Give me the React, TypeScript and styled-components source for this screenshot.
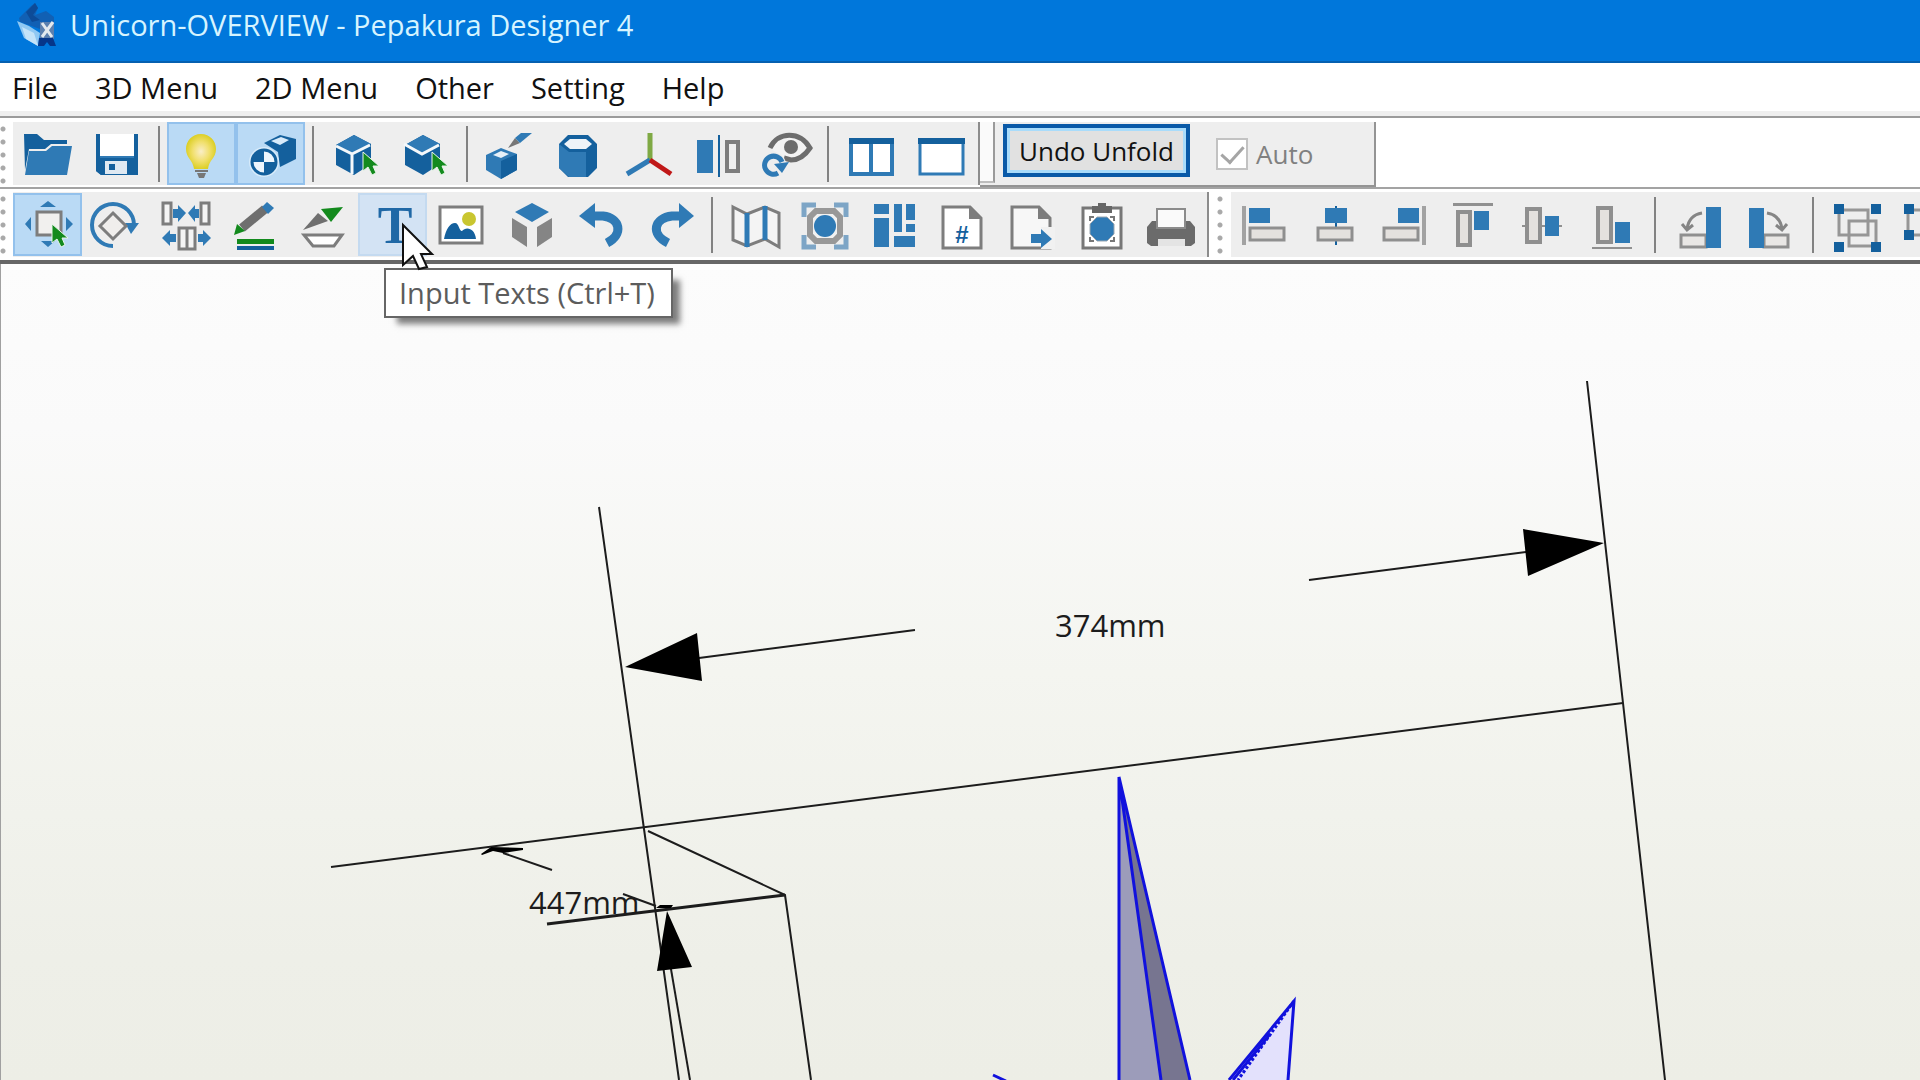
import React from "react";
import styled, { createGlobalStyle } from "styled-components";

const BLUE = "#2f7ab5";
const DEEP = "#14609d";
const GRAY = "#7d7d7d";
const GREEN = "#138a1d";
const UI_FONT = `"Open Sans", "Noto Sans", sans-serif`;

const GlobalStyle = createGlobalStyle`
  * { box-sizing: border-box; }
  body { margin: 0; background: #fff; font-family: ${UI_FONT}; overflow: hidden; }
`;

const Window = styled.div`
  display: flex;
  flex-direction: column;
  height: 100vh;
`;

const TitleBar = styled.header`
  display: flex;
  align-items: center;
  gap: 12px;
  height: 63px;
  padding: 0 0 12px 16px;
  background: #0077db;
  border-bottom: 2px solid #0560b0;
`;

const Title = styled.h1`
  margin: 0;
  font-size: 29px;
  line-height: 36px;
  font-weight: 500;
  color: #d6f4ff;
  white-space: nowrap;
`;

const MenuBar = styled.nav`
  display: flex;
  align-items: center;
  gap: 37px;
  height: 55px;
  padding: 0 12px 4px;
  background: linear-gradient(#fff 48px, #efefef 48px);
  border-bottom: 2px solid #9b9b9b;
`;

const MenuItem = styled.button`
  padding: 0;
  border: 0;
  background: none;
  font-family: inherit;
  font-size: 29px;
  line-height: 36px;
  color: #111;
  white-space: nowrap;
`;

const Row = styled.div<{ $last?: boolean }>`
  display: flex;
  align-items: stretch;
  height: ${(p) => (p.$last ? 75 : 71)}px;
  padding: ${(p) => (p.$last ? "3px 0" : "4px 0 2px")};
  overflow: hidden;
  border-bottom: ${(p) => (p.$last ? "4px solid #666" : "2px solid #a3a3a3")};
`;

const Group = styled.div<{ $edge?: boolean }>`
  display: flex;
  flex: none;
  align-items: center;
  padding-right: 4px;
  background: #eeeeee;
  border-right: ${(p) => (p.$edge ? "2px solid #8c8c8c" : "0")};
`;

const Grip = styled.div<{ $wide?: boolean }>`
  flex: none;
  align-self: stretch;
  width: ${(p) => (p.$wide ? 22 : 13)}px;
  background: radial-gradient(circle at ${(p) => (p.$wide ? 11 : 3)}px 7px, #a9a9a9 2px, transparent 3px) 0 0 / 100% 13px #fff;
`;

const Tool = styled.button<{ $on?: boolean; $hover?: boolean }>`
  position: relative;
  display: flex;
  align-items: center;
  justify-content: center;
  width: 69px;
  height: 63px;
  padding: 0;
  border: 2px solid ${(p) => (p.$on ? "#93c1ec" : p.$hover ? "#c4daf0" : "transparent")};
  background: ${(p) => (p.$on ? "#badaf5" : p.$hover ? "#d3e3f4" : "transparent")};
  svg { flex: none; overflow: visible; }
`;

const Separator = styled.div<{ $w: number }>`
  flex: none;
  width: ${(p) => p.$w}px;
  height: 56px;
  background: linear-gradient(#828282, #828282) center / 2px 100% no-repeat;
`;

const UnfoldBar = styled.div`
  display: flex;
  flex: none;
  align-items: center;
  width: 396px;
  margin-bottom: -2px;
  background: #eeeeee;
  border-right: 2px solid #949494;
  border-bottom: 2px solid #949494;
`;

const HookGrip = styled.div`
  align-self: flex-start;
  width: 15px;
  height: 61px;
  border-right: 2px solid #9a9a9a;
  border-bottom: 2px solid #bdbdbd;
  background: #fafafa;
`;

const UndoUnfold = styled.button`
  width: 187px;
  height: 53px;
  margin: 0 26px 6px 8px;
  padding: 0;
  border: 4px solid #0a5aa8;
  box-shadow: inset 0 0 0 3px #a9dcfb;
  background: #e1e1e1;
  font-family: inherit;
  font-size: 26px;
  line-height: 36px;
  color: #111;
  white-space: nowrap;
`;

const AutoLabel = styled.label`
  display: flex;
  align-items: center;
  gap: 8px;
  font-size: 26px;
  line-height: 36px;
  color: #808080;
`;

const AutoBox = styled.input`
  appearance: none;
  position: relative;
  width: 32px;
  height: 32px;
  margin: 0;
  border: 2px solid #c2c2c2;
  background: #fff;
  &::after {
    content: "";
    position: absolute;
    left: 8px;
    top: 1px;
    width: 10px;
    height: 19px;
    border: solid #a5a5a5;
    border-width: 0 3px 3px 0;
    transform: rotate(42deg);
  }
`;

const Canvas = styled.main`
  position: relative;
  flex: 1;
  min-height: 0;
  border-left: 1px solid #a0a0a0;
  background: linear-gradient(#fcfcfc, #fafafa 20%, #f4f5f0 50%, #eeefe8 85%, #edeee6);
`;

const Scene = styled.svg`
  display: block;
  width: 100%;
  height: 100%;
  font-family: ${UI_FONT};
`;

const Tooltip = styled.div`
  position: absolute;
  left: 383px;
  top: 4px;
  padding: 5px 16px 5px 13px;
  border: 2px solid #666;
  background: #fff;
  box-shadow: 10px 9px 6px -3px rgba(0, 0, 0, 0.5);
  font-size: 29px;
  line-height: 36px;
  color: #5c5c5c;
  white-space: nowrap;
`;

const Pointer = styled.svg`
  position: absolute;
  left: 400px;
  top: -42px;
`;

const GreenCursor = ({ x, y }: { x: number; y: number }) => (
  <path
    transform={`translate(${x} ${y})`}
    d="M0 0V19L5 15L9 23L13 21L10 14H16Z"
    fill={GREEN}
    stroke="#e9f5ea"
    strokeWidth="1"
  />
);

const cubeBody = (
  <>
    <path d="M4 15L22 5L39 14V34L22 45L4 35Z" fill={DEEP} />
    <path d="M4 15L22 5L39 14L22 23Z" fill={BLUE} />
  </>
);

const docShape = "M5 6H32L43 17V47H5Z";
const octagon = "M-5 -12H5L12 -5V5L5 12H-5L-12 5V-5Z";

const icons: Record<string, React.ReactNode> = {
  open: (
    <>
      <path d="M0 4H13L20 10H43V14H27L21 19H5L1 40Z" fill={DEEP} />
      <path d="M5 21H22L28 16H48L43 45H1Z" fill={BLUE} />
    </>
  ),
  save: (
    <>
      <path d="M3 4H45V45H8L3 41Z" fill={BLUE} />
      <path d="M3 4H7V28H41V4H45V45H8L3 41Z" fill={DEEP} />
      <path d="M7 4H41V26H7Z" fill="#fff" />
      <path d="M12 31H34V44H12Z" fill="#dfe9f2" />
      <path d="M16 34H22V40H16Z" fill={DEEP} />
    </>
  ),
  light: (
    <>
      <defs>
        <radialGradient id="glow">
          <stop offset="0" stopColor="#faeec8" />
          <stop offset=".55" stopColor="#f1e06e" />
          <stop offset="1" stopColor="#dccf27" />
        </radialGradient>
      </defs>
      <path d="M23 4C14 4 8 11 8 19C8 28 15 30 16 39H30C31 30 38 28 38 19C38 11 32 4 23 4Z" fill="url(#glow)" />
      <path d="M17 40H30V42H17ZM19 43H28L26 48H21Z" fill="#777" />
    </>
  ),
  texture: (
    <>
      <path d="M17 13L33 5L49 9V29L33 37L31 22Z" fill={DEEP} />
      <path d="M24 11L34 7L42 10L33 15Z" fill="#d8ebfa" />
      <circle cx="17" cy="32" r="15" fill="#d8ebfa" />
      <circle cx="17" cy="32" r="12" fill="#eef6fd" stroke={DEEP} strokeWidth="3" />
      <path d="M17 32V20A12 12 0 0 0 5 32ZM17 32V44A12 12 0 0 0 29 32Z" fill={DEEP} />
    </>
  ),
  selectFace: (
    <>
      {cubeBody}
      <path d="M4 16L20 24V44M20 24L38 15" fill="none" stroke="#f4f8fb" strokeWidth="3" />
      <GreenCursor x={31} y={22} />
    </>
  ),
  selectEdge: (
    <>
      {cubeBody}
      <path d="M3 14L21 24L38 15" fill="none" stroke="#f4f8fb" strokeWidth="3" />
      <GreenCursor x={31} y={22} />
    </>
  ),
  paintCube: (
    <>
      <path d="M0 25L15 18L31 24V40L15 49L0 40Z" fill={BLUE} />
      <path d="M15 31L31 24V40L15 49Z" fill={DEEP} />
      <path d="M7 25L15 21L23 24L15 28Z" fill="#e6f0f8" />
      <path d="M22 18L29 8L34 13Z" fill="#777" />
      <path d="M29 8L35 3H46L34 13Z" fill={BLUE} />
    </>
  ),
  cylinder: (
    <>
      <path d="M4 14L13 5H33L42 14V38L33 47H13L4 38Z" fill={DEEP} />
      <path d="M4 14L14 22V47L4 38ZM14 22H31V47H14Z" fill={BLUE} />
      <path d="M9 14L15 9H31L37 14L31 19H15Z" fill="#eef3f8" />
    </>
  ),
  axes: (
    <g strokeWidth="5" fill="none">
      <path d="M26 30V3" stroke="#7fa944" />
      <path d="M26 30L3 44" stroke={BLUE} />
      <path d="M26 30L47 44" stroke="#c01818" />
    </g>
  ),
  mirror: (
    <>
      <path d="M4 10H20V43H4Z" fill={BLUE} />
      <path d="M26 5V47" stroke={DEEP} strokeWidth="2" />
      <path d="M34 12H45V41H34Z" fill="#eee" stroke={GRAY} strokeWidth="4" />
    </>
  ),
  view: (
    <>
      <path d="M8 18C16 1 38 1 48 18C42 27 36 30 29 30L22 28" fill="#f3f3f3" stroke="#6d6d6d" strokeWidth="5" />
      <circle cx="29" cy="17" r="7" fill="#6d6d6d" />
      <circle cx="11" cy="35" r="13" fill="#eee" />
      <path d="M16 43A9 9 0 1 1 20 32" fill="none" stroke={BLUE} strokeWidth="5" />
      <path d="M12 34L27 32L20 43Z" fill={BLUE} />
    </>
  ),
  twoPanes: (
    <>
      <path d="M4 10H45V44H4ZM24 12V44" fill="#fff" stroke={BLUE} strokeWidth="4" />
      <path d="M2 8H47V14H2Z" fill={DEEP} />
    </>
  ),
  onePane: (
    <>
      <path d="M4 10H47V44H4Z" fill="#fff" stroke={BLUE} strokeWidth="3" />
      <path d="M2 8H49V14H2Z" fill={DEEP} />
    </>
  ),
  move: (
    <>
      <path d="M16 6L24 0L32 6ZM7 16V30L1 23ZM42 16V30L49 23ZM17 40H31L24 46Z" fill={BLUE} />
      <path d="M13 11H37V34H13Z" fill="#f1f0ee" stroke={GRAY} strokeWidth="3" />
      <GreenCursor x={28} y={23} />
    </>
  ),
  rotate: (
    <>
      <path d="M20 45A21 21 0 1 1 41 24" fill="none" stroke={BLUE} strokeWidth="4" />
      <path d="M32 22H46L38 33Z" fill={BLUE} />
      <path d="M20 12L33 25L20 38L7 25Z" fill="#f0eeec" stroke={GRAY} strokeWidth="3" />
    </>
  ),
  joinParts: (
    <>
      <path d="M1 2H9V23H1ZM39 2H47V23H39ZM17 27H25V48H17ZM25 27H33V48H25Z" fill="#f4f4f4" stroke={GRAY} strokeWidth="3" />
      <path
        d="M11 8H16V4L24 12L16 21V17H11ZM37 8H33V4L26 12L33 21V17H37ZM14 33H8V29L0 37L8 45V41H14ZM36 33H41V29L49 37L41 45V41H36Z"
        fill={BLUE}
      />
    </>
  ),
  lineColor: (
    <>
      <path d="M11 27L34 8" stroke="#6f6f6f" strokeWidth="9" />
      <path d="M31 6L36 1L43 7L37 13Z" fill={BLUE} />
      <path d="M3 34L6 23L14 30Z" fill={GREEN} />
      <path d="M6 38H43V43H6Z" fill={GREEN} />
      <path d="M6 45H43V49H6Z" fill={DEEP} />
    </>
  ),
  flaps: (
    <>
      <path d="M3 29L18 12L28 20Z" fill="#6f6f6f" />
      <path d="M21 8L43 6L31 21Z" fill={GREEN} />
      <path d="M4 34H42L34 45H13Z" fill="#fff" stroke={GRAY} strokeWidth="3" />
    </>
  ),
  text: (
    <text x="26" y="42" textAnchor="middle" fontFamily="Liberation Serif, serif" fontWeight="700" fontSize="52" fill="#1f68a6">
      T
    </text>
  ),
  image: (
    <>
      <path d="M2 6H44V42H2Z" fill="#fff" stroke={GRAY} strokeWidth="3" />
      <circle cx="31" cy="18" r="7" fill="#c9c630" />
      <path d="M6 38C8 28 12 22 17 22C21 22 21 30 24 30C28 25 37 27 38 38Z" fill={DEEP} />
    </>
  ),
  cube3d: (
    <>
      <path d="M8 11L25 2L42 11L25 21Z" fill={BLUE} />
      <path d="M5 17L20 26V46L5 36ZM45 17L30 26V46L45 36Z" fill="#858585" />
    </>
  ),
  undo: (
    <>
      <path d="M17 15H27C44 17 48 33 31 42" fill="none" stroke={BLUE} strokeWidth="9" />
      <path d="M3 15L19 2V27Z" fill={BLUE} />
    </>
  ),
  redo: (
    <>
      <path d="M35 15H27C9 17 5 33 23 42" fill="none" stroke={BLUE} strokeWidth="9" />
      <path d="M49 15L34 2V27Z" fill={BLUE} />
    </>
  ),
  unfoldMap: (
    <>
      <path d="M2 6L16 13L34 6L48 12V46L34 38L16 45L2 39Z" fill="#f4f4f4" stroke={GRAY} strokeWidth="3" />
      <path d="M16 12V46M34 5V39" stroke={BLUE} strokeWidth="5" />
    </>
  ),
  fit: (
    <>
      <path d="M4 16V4H16M34 4H46V16M46 34V46H34M16 46H4V34" fill="none" stroke="#7da5c6" strokeWidth="5" />
      <path transform="translate(25 25)" d="M-9 -15H9L15 -9V9L9 15H-9L-15 9V-9Z" fill="#f1f1f1" stroke="#989898" strokeWidth="6" />
      <circle cx="25" cy="25" r="11" fill={BLUE} />
    </>
  ),
  arrange: (
    <path d="M5 3H20V13H5ZM5 17H20V46H5ZM25 3H33V31H25ZM37 3H46V19H37ZM37 23H46V31H37ZM25 35H46V46H25Z" fill={BLUE} />
  ),
  number: (
    <>
      <path d={docShape} fill="#fff" stroke={GRAY} strokeWidth="3" />
      <path d="M31 5L44 18H31Z" fill={GRAY} />
      <text x="24" y="42" textAnchor="middle" fontFamily="Liberation Sans, sans-serif" fontWeight="700" fontSize="24" fill={DEEP}>
        #
      </text>
    </>
  ),
  exportDoc: (
    <>
      <path d={docShape} fill="#f7f7f7" stroke={GRAY} strokeWidth="3" />
      <path d="M31 5L44 18H31Z" fill={GRAY} />
      <path d="M34 26H48V48H34Z" fill="#f1f1f1" />
      <path d="M24 33H34V28L45 38L34 47V42H24Z" fill={BLUE} />
    </>
  ),
  clipboard: (
    <>
      <path d="M7 7H45V47H7Z" fill="#fff" stroke="#777" strokeWidth="3" />
      <path d="M16 5H22V2H30V5H36V12H16Z" fill="#666" />
      <path transform="translate(26 28)" d={octagon} fill={BLUE} stroke="#9aa6b0" strokeWidth="1" />
      <path d="M14 20V16H18M34 16H38V20M38 36V40H34M18 40H14V36" fill="none" stroke="#777" strokeWidth="2" />
    </>
  ),
  print: (
    <>
      <path d="M7 20H45L50 26V42L46 45H6L2 42V26Z" fill="#6b6b6b" />
      <path d="M12 8H40V27H12Z" fill="#fafafa" stroke="#8b8b8b" strokeWidth="2" />
      <path d="M13 38H40V45H13Z" fill="#e4e4e4" />
    </>
  ),
  alignLeft: (
    <>
      <path d="M0 5H4V44H0Z" fill="#a2a2a2" />
      <path d="M7 7H28V22H7Z" fill={BLUE} />
      <path d="M8 27H42V39H8Z" fill="#e4e1de" stroke="#8f8f8f" strokeWidth="3" />
    </>
  ),
  alignCenter: (
    <>
      <path d="M25 5V44" stroke={DEEP} strokeWidth="2" />
      <path d="M14 7H36V22H14Z" fill={BLUE} />
      <path d="M7 27H41V39H7Z" fill="#e4e1de" stroke="#8f8f8f" strokeWidth="3" />
    </>
  ),
  alignRight: (
    <>
      <path d="M42 5H46V44H42Z" fill="#a2a2a2" />
      <path d="M18 7H39V22H18Z" fill={BLUE} />
      <path d="M4 27H38V39H4Z" fill="#e4e1de" stroke="#8f8f8f" strokeWidth="3" />
    </>
  ),
  alignTop: (
    <>
      <path d="M4 2H44V5H4Z" fill="#909090" />
      <path d="M9 11H21V44H9Z" fill="#e4e1de" stroke="#8f8f8f" strokeWidth="4" />
      <path d="M25 10H40V29H25Z" fill={BLUE} />
    </>
  ),
  alignMiddle: (
    <>
      <path d="M4 25H44" stroke="#909090" strokeWidth="2" />
      <path d="M9 8H22V41H9Z" fill="#e4e1de" stroke="#8f8f8f" strokeWidth="4" />
      <path d="M27 15H41V35H27Z" fill={BLUE} />
    </>
  ),
  alignBottom: (
    <>
      <path d="M5 46H45V48H5Z" fill="#909090" />
      <path d="M11 7H24V41H11Z" fill="#e4e1de" stroke="#8f8f8f" strokeWidth="4" />
      <path d="M28 21H43V42H28Z" fill={BLUE} />
    </>
  ),
  turnLeft: (
    <>
      <path d="M5 34H30V46H5Z" fill="#e9e7e5" stroke="#8f8f8f" strokeWidth="3" />
      <path d="M30 6H45V47H30Z" fill={BLUE} />
      <path d="M26 12Q13 14 11 28M6 23L11 29L17 24" fill="none" stroke="#858585" strokeWidth="3" />
    </>
  ),
  turnRight: (
    <>
      <path d="M19 34H43V46H19Z" fill="#e9e7e5" stroke="#8f8f8f" strokeWidth="3" />
      <path d="M4 7H19V47H4Z" fill={BLUE} />
      <path d="M22 12Q35 14 37 28M31 24L37 29L42 23" fill="none" stroke="#858585" strokeWidth="3" />
    </>
  ),
  group: (
    <>
      <path d="M5 9H34V34H5ZM15 20H42V45H15Z" fill="none" stroke="#969696" strokeWidth="3" />
      <path d="M0 3H10V13H0ZM37 3H47V13H37ZM0 41H10V51H0ZM37 41H47V51H37Z" fill={DEEP} />
    </>
  ),
  ungroup: (
    <>
      <path d="M5 9H34V34H5Z" fill="none" stroke="#969696" strokeWidth="3" />
      <path d="M1 3H11V13H1ZM1 29H11V39H1ZM30 3H40V13H30Z" fill={DEEP} />
    </>
  ),
};

type Entry = { icon: string; label: string; on?: boolean; hover?: boolean } | "|";

const viewTools: Entry[] = [
  { icon: "open", label: "Open" },
  { icon: "save", label: "Save" },
  "|",
  { icon: "light", label: "Light", on: true },
  { icon: "texture", label: "Texture", on: true },
  "|",
  { icon: "selectFace", label: "Select Face" },
  { icon: "selectEdge", label: "Select Edge" },
  "|",
  { icon: "paintCube", label: "Paint Model" },
  { icon: "cylinder", label: "Show Solid" },
  { icon: "axes", label: "Show Axes" },
  { icon: "mirror", label: "Mirror" },
  { icon: "view", label: "Reset View" },
  "|",
  { icon: "twoPanes", label: "Two Panes" },
  { icon: "onePane", label: "One Pane" },
];

const editTools: Entry[] = [
  { icon: "move", label: "Select and Move", on: true },
  { icon: "rotate", label: "Rotate" },
  { icon: "joinParts", label: "Join or Disjoin" },
  { icon: "lineColor", label: "Edge Color" },
  { icon: "flaps", label: "Edit Flaps" },
  { icon: "text", label: "Input Texts", hover: true },
  { icon: "image", label: "Input Image" },
  { icon: "cube3d", label: "Input 3D View" },
  { icon: "undo", label: "Undo" },
  { icon: "redo", label: "Redo" },
  "|",
  { icon: "unfoldMap", label: "Unfold" },
  { icon: "fit", label: "Fit to Window" },
  { icon: "arrange", label: "Arrange Parts" },
  { icon: "number", label: "Edge Numbers" },
  { icon: "exportDoc", label: "Export" },
  { icon: "clipboard", label: "Copy" },
  { icon: "print", label: "Print" },
];

const alignTools: Entry[] = [
  { icon: "alignLeft", label: "Align Left" },
  { icon: "alignCenter", label: "Align Center" },
  { icon: "alignRight", label: "Align Right" },
  { icon: "alignTop", label: "Align Top" },
  { icon: "alignMiddle", label: "Align Middle" },
  { icon: "alignBottom", label: "Align Bottom" },
  "|",
  { icon: "turnLeft", label: "Rotate Left" },
  { icon: "turnRight", label: "Rotate Right" },
  "|",
  { icon: "group", label: "Group" },
  { icon: "ungroup", label: "Ungroup" },
];

function Tools({ items, gap, edge }: { items: Entry[]; gap: number; edge?: boolean }) {
  return (
    <Group role="toolbar" $edge={edge}>
      {items.map((t, i) =>
        t === "|" ? (
          <Separator key={i} $w={gap} />
        ) : (
          <Tool key={i} aria-label={t.label} $on={t.on} $hover={t.hover}>
            <svg width="48" height="48" viewBox="0 0 48 48" aria-hidden="true">
              {icons[t.icon]}
            </svg>
          </Tool>
        )
      )}
    </Group>
  );
}

const Logo = () => (
  <svg width="42" height="44" viewBox="0 0 42 44" aria-hidden="true">
    <path d="M3 15L15 3L19 0L22 5L19 12L30 8L38 14V20L24 26L4 19Z" fill="#1160b4" />
    <path d="M10 9L19 0L22 5L17 12L24 17L16 19Z" fill="#0d4b98" />
    <path d="M1 18L13 23L24 30L22 43L8 35Z" fill="#8fc8f3" />
    <path d="M6 24L18 30L22 43L10 36Z" fill="#c3e3f9" />
    <path d="M24 19H38V36H24Z" fill="#5b7fae" />
    <path d="M26 20L36 34M37 19L26 34" stroke="#e3e9ee" strokeWidth="3" />
    <path d="M23 35H37L40 43H34L31 39L28 43H22Z" fill="#06368a" />
  </svg>
);

export default function App() {
  return (
    <Window>
      <GlobalStyle />
      <TitleBar>
        <Logo />
        <Title>Unicorn-OVERVIEW - Pepakura Designer 4</Title>
      </TitleBar>
      <MenuBar>
        {["File", "3D Menu", "2D Menu", "Other", "Setting", "Help"].map((m) => (
          <MenuItem key={m}>{m}</MenuItem>
        ))}
      </MenuBar>
      <Row>
        <Grip />
        <Tools items={viewTools} gap={16} edge />
        <UnfoldBar>
          <HookGrip />
          <UndoUnfold>Undo Unfold</UndoUnfold>
          <AutoLabel>
            <AutoBox type="checkbox" defaultChecked disabled />
            Auto
          </AutoLabel>
        </UnfoldBar>
      </Row>
      <Row $last>
        <Grip />
        <Tools items={editTools} gap={17} edge />
        <Grip $wide />
        <Tools items={alignTools} gap={20} />
      </Row>
      <Canvas>
        <Scene role="img" aria-label="3D view with dimensions">
          <g transform="translate(-1 -264)">
            <g fill="none" stroke="#1c1c1c" strokeWidth="2">
              <path d="M599 507L644 829L679 1080" />
              <path d="M1587 381L1623 703L1665 1080" />
              <path d="M331 867L1623 703" />
              <path d="M699 658L915 630M1309 580L1526 552" />
              <path d="M648 831L785 895L811 1080" />
              <path d="M666 940L690 1080" />
              <path d="M503 853L552 870M623 894L656 906" />
              <path d="M547 924L785 895" strokeWidth="3" />
            </g>
            <path d="M625 667L697 633L702 681ZM1604 543L1523 529L1528 576ZM667 911L657 971L692 967Z" fill="#000" />
            <path d="M481 854L491 847L523 848L523 850L503 853L493 851L482 855ZM656 908L660 905L673 905L671 908Z" fill="#000" />
            <path d="M1119 778L1161 1080H1119Z" fill="#9c9cba" />
            <path d="M1119 778L1190 1080H1161Z" fill="#777590" />
            <path d="M1294 1001L1288 1080H1232Z" fill="#e3e1fc" />
            <g fill="none" stroke="#1111dd" strokeWidth="3">
              <path d="M1119 1080V777L1161 1080M1119 777L1190 1080" />
              <path d="M1229 1080L1294 1001L1288 1080" />
              <path d="M1294 1001L1238 1080" strokeDasharray="3 2" />
              <path d="M1233 1080L1270 1034M993 1075L1006 1081" />
            </g>
            <g fontSize="31" fill="#1c1c1c">
              <text x="1055" y="637">374mm</text>
              <text x="529" y="914">447mm</text>
            </g>
          </g>
        </Scene>
        <Tooltip role="tooltip">Input Texts (Ctrl+T)</Tooltip>
        <Pointer width="34" height="50" viewBox="0 0 34 50" aria-hidden="true">
          <path d="M2 3V43L12 34L18 47L26 45L20 32H31Z" fill="#fff" stroke="#111" strokeWidth="2" />
        </Pointer>
      </Canvas>
    </Window>
  );
}
